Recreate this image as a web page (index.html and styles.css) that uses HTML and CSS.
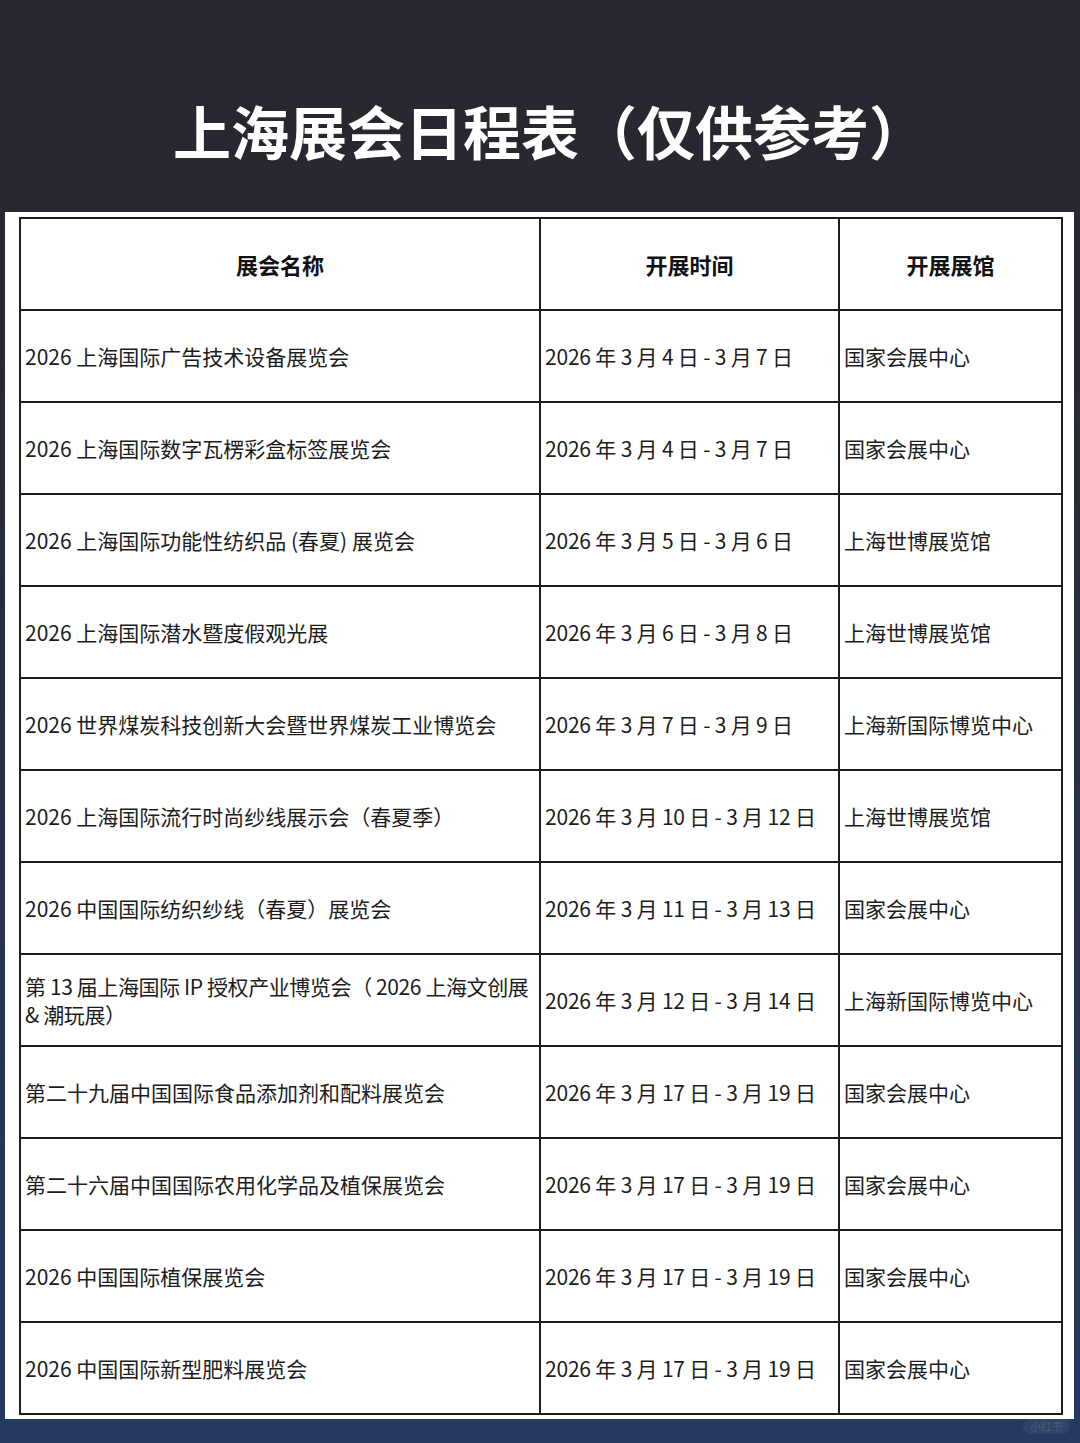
FILE: index.html
```html
<!DOCTYPE html>
<html lang="zh-CN">
<head>
<meta charset="utf-8">
<title>上海展会日程表</title>
<link rel="stylesheet" href="styles.css">
</head>
<body>
<header class="hero">
  <h1 class="hero-title">上海展会日程表（仅供参考）</h1>
</header>
<main class="panel">
  <table class="schedule">
    <colgroup>
      <col class="c-name">
      <col class="c-date">
      <col class="c-venue">
    </colgroup>
    <thead>
      <tr><th>展会名称</th><th>开展时间</th><th>开展展馆</th></tr>
    </thead>
    <tbody>
      <tr><td>2026 上海国际广告技术设备展览会</td><td>2026 年 3 月 4 日 - 3 月 7 日</td><td>国家会展中心</td></tr>
      <tr><td>2026 上海国际数字瓦楞彩盒标签展览会</td><td>2026 年 3 月 4 日 - 3 月 7 日</td><td>国家会展中心</td></tr>
      <tr><td>2026 上海国际功能性纺织品 (春夏) 展览会</td><td>2026 年 3 月 5 日 - 3 月 6 日</td><td>上海世博展览馆</td></tr>
      <tr><td>2026 上海国际潜水暨度假观光展</td><td>2026 年 3 月 6 日 - 3 月 8 日</td><td>上海世博展览馆</td></tr>
      <tr><td>2026 世界煤炭科技创新大会暨世界煤炭工业博览会</td><td>2026 年 3 月 7 日 - 3 月 9 日</td><td>上海新国际博览中心</td></tr>
      <tr><td>2026 上海国际流行时尚纱线展示会（春夏季）</td><td>2026 年 3 月 10 日 - 3 月 12 日</td><td>上海世博展览馆</td></tr>
      <tr><td>2026 中国国际纺织纱线（春夏）展览会</td><td>2026 年 3 月 11 日 - 3 月 13 日</td><td>国家会展中心</td></tr>
      <tr><td class="tight">第 13 届上海国际 IP 授权产业博览会（ 2026 上海文创展<br>&amp; 潮玩展）</td><td>2026 年 3 月 12 日 - 3 月 14 日</td><td>上海新国际博览中心</td></tr>
      <tr><td>第二十九届中国国际食品添加剂和配料展览会</td><td>2026 年 3 月 17 日 - 3 月 19 日</td><td>国家会展中心</td></tr>
      <tr><td>第二十六届中国国际农用化学品及植保展览会</td><td>2026 年 3 月 17 日 - 3 月 19 日</td><td>国家会展中心</td></tr>
      <tr><td>2026 中国国际植保展览会</td><td>2026 年 3 月 17 日 - 3 月 19 日</td><td>国家会展中心</td></tr>
      <tr><td>2026 中国国际新型肥料展览会</td><td>2026 年 3 月 17 日 - 3 月 19 日</td><td>国家会展中心</td></tr>
    </tbody>
  </table>
</main>
<div class="watermark">小红书</div>
</body>
</html>
```

FILE: styles.css
```css
* { box-sizing: border-box; }

html, body {
  margin: 0;
  padding: 0;
}

body {
  width: 1080px;
  height: 1443px;
  overflow: hidden;
  position: relative;
  background: linear-gradient(180deg, #29262f 0%, #29272f 20%, #263354 70%, #243a60 100%);
  font-family: "Noto Sans CJK SC", "Noto Sans", sans-serif;
  color: #1a1a1a;
}

.hero {
  height: 212px;
  display: flex;
  align-items: center;
  justify-content: center;
  padding-left: 20px;
  padding-top: 48px;
}

.hero-title {
  margin: 0;
  color: #ffffff;
  font-family: "Noto Sans CJK SC", sans-serif;
  font-weight: 700;
  font-size: 58px;
  letter-spacing: 0;
  line-height: 1;
}

.panel {
  margin: 0 6px 0 5px;
  background: #ffffff;
  padding: 5px 13px 4px 14px;
}

.schedule {
  width: 1042px;
  border-collapse: collapse;
  table-layout: fixed;
  border: 2px solid #1e1e1e;
}

.c-name { width: 520px; }
.c-date { width: 299px; }
.c-venue { width: 223px; }

.schedule th,
.schedule td {
  border: 2px solid #1e1e1e;
  height: 92px;
  padding: 0 4px;
  font-size: 21px;
  line-height: 28px;
  vertical-align: middle;
  text-align: left;
  font-weight: 400;
  color: #1c1c1c;
}

.schedule th {
  text-align: center;
  font-weight: 700;
  font-size: 22px;
  color: #111;
}

.schedule td:first-child {
  padding-right: 0;
}

.schedule td.tight {
  letter-spacing: -0.4px;
  white-space: nowrap;
}

.schedule td:nth-child(2) {
  white-space: nowrap;
  letter-spacing: -0.2px;
}

.watermark {
  position: absolute;
  right: 10px;
  bottom: 9px;
  padding: 1px 7px;
  border-radius: 10px;
  background: rgba(255, 255, 255, 0.06);
  color: rgba(255, 255, 255, 0.14);
  font-size: 11px;
  line-height: 14px;
}
```
